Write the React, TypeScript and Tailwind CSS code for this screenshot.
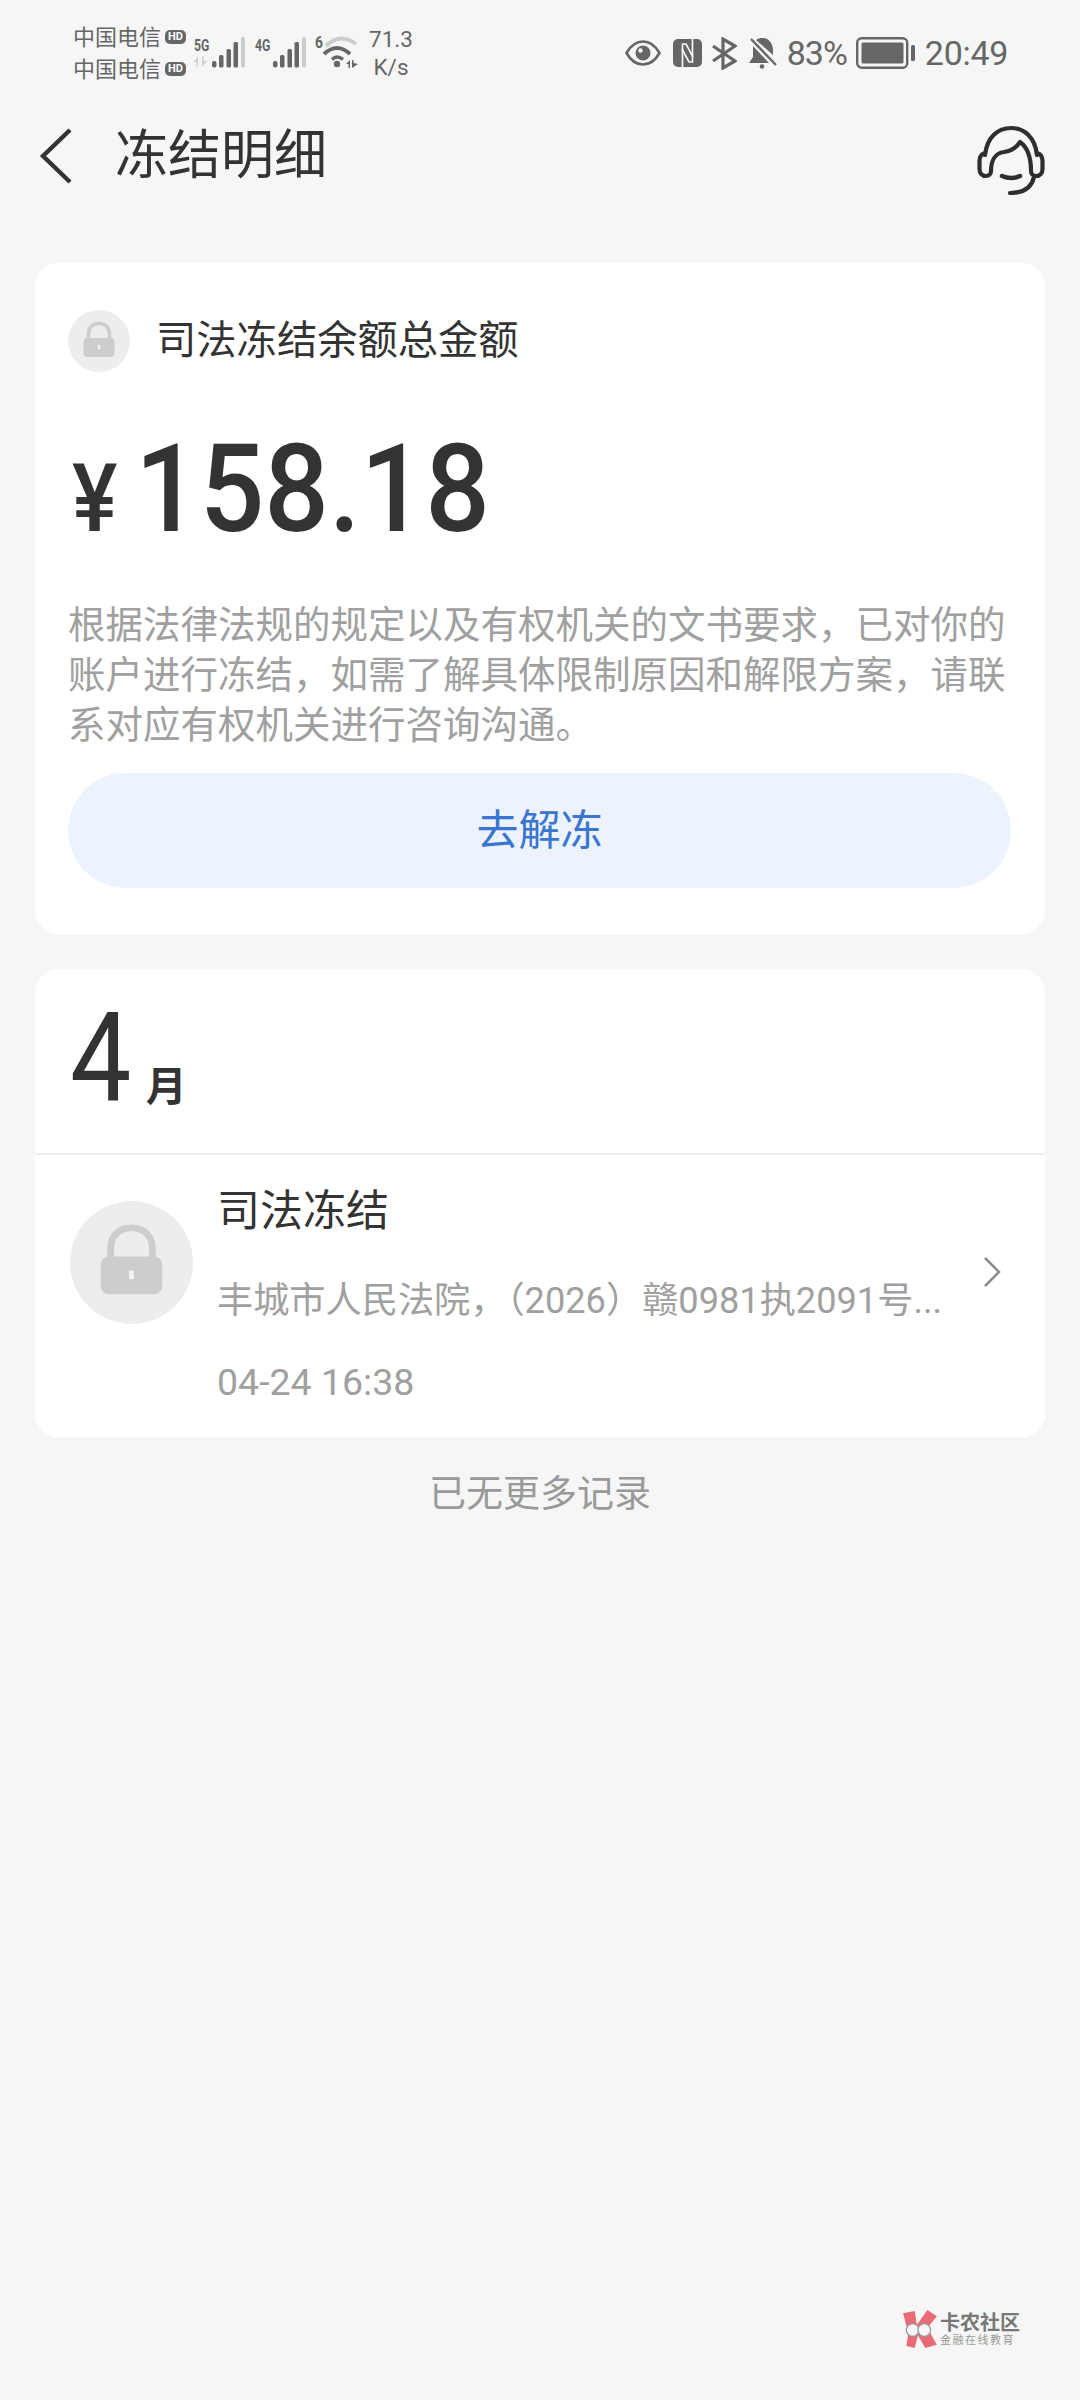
const FONT = "font-[Roboto,'Noto_Sans_CJK_SC',sans-serif]";

function Signal({ label, arrows }: { label: string; arrows?: boolean }) {
  return (
    <div className="h-[31px] w-[51px] relative shrink-0">
      <span className="absolute left-0 top-[-2px] w-[24px] text-[17px] leading-[20px] font-bold text-[#666] scale-x-[0.72] origin-left">{label}</span>
      {arrows && (
        <svg width="16" height="11" viewBox="0 0 16 11" className="absolute left-0 bottom-[1px]">
          <path d="M0 6L4 0V11H2.500V6ZM8 0H9.500V5H13L8 11Z" fill="#d0d0d0" />
        </svg>
      )}
      <svg width="33" height="31" viewBox="0 0 33 31" className="absolute right-0 top-0">
        <rect x="0" y="24" width="4.500" height="6.500" rx="2" fill="#666" />
        <rect x="7" y="18" width="4.500" height="12.500" rx="1.500" fill="#666" />
        <rect x="14.500" y="12" width="4.500" height="18.500" rx="1.500" fill="#666" />
        <rect x="21.500" y="5" width="4.500" height="25.500" rx="1.500" fill="#666" />
        <rect x="29" y="0" width="4" height="30.500" rx="1.500" fill="#ccc" />
      </svg>
    </div>
  );
}

function HD() {
  return <span className="w-[21px] h-[14px] rounded-[5px] bg-[#666] text-white text-[11px] leading-[14px] font-bold text-center ml-[4px] shrink-0">HD</span>;
}

function Lock({ size }: { size: number }) {
  return (
    <svg width={size} height={size} viewBox="0 0 62 62" className="shrink-0">
      <circle cx="31" cy="31" r="31" fill="#ededed" />
      <path d="M20.500 31V23.500C20.500 17.500 25 13.500 31 13.500C37 13.500 41.500 17.500 41.500 23.500V31" fill="none" stroke="#cdcdcd" strokeWidth="3.400" />
      <rect x="15.500" y="28" width="31" height="19" rx="4" fill="#cdcdcd" />
      <rect x="29.800" y="35" width="2.400" height="4.400" fill="#f4f4f4" />
    </svg>
  );
}

function Headset() {
  return (
    <svg width="68" height="70" viewBox="0 0 68 70" fill="none" stroke="#2e2e2e" strokeWidth="4.200" strokeLinecap="round" strokeLinejoin="round">
      <path d="M8 30C10 12 21 3 34 3C47 3 58 12 60 30" />
      <path d="M8 28C4 29 2.500 32 2.500 36V44C2.500 48 5 51 9 51C12 51 14 49 14 46C14 36 18 28 27 27C34 26 39 23 43 17C50 22 54 31 54 46C54 49 56 51 59 51C63 51 65.500 48 65.500 44V36C65.500 32 64 29 60 28" />
      <path d="M25 51Q34 55 43 51" strokeWidth="4.500" />
      <path d="M57 52C55 61 48 68 33 68" />
    </svg>
  );
}

export default function App() {
  return (
    <div className={`w-[1080px] h-[2400px] bg-[#f6f6f6] flex flex-col ${FONT} text-[#333]`}>
      <div className="h-[106px] flex items-start pl-[73px] pr-[72px] pt-[25px] text-[#666] shrink-0">
        <div className="flex flex-col w-[112px] shrink-0 whitespace-nowrap mt-[-4px]">
          <div className="flex items-center h-[32px] text-[22px]">中国电信<HD /></div>
          <div className="flex items-center h-[32px] text-[22px]">中国电信<HD /></div>
        </div>
        <div className="flex items-start mt-[12px] ml-[9px]">
          <Signal label="5G" arrows />
          <div className="ml-[10px]"><Signal label="4G" /></div>
          <svg width="44" height="34" viewBox="0 0 44 34" fill="#666" className="ml-[9px] mt-[-2px] shrink-0">
            <text x="0" y="13" fontSize="17" fontWeight="700" textLength="8" lengthAdjust="spacingAndGlyphs">6</text>
            <path d="M11 11Q25 -3 41 9" fill="none" stroke="#ccc" strokeWidth="4" />
            <path d="M9 19Q22 7 35 19" fill="none" stroke="#666" strokeWidth="3.800" />
            <path d="M17 24.500Q22 19.500 28 24.500" fill="none" stroke="#666" strokeWidth="3.400" />
            <circle cx="22" cy="29" r="3.200" />
            <path d="M31 29L35 25V33H33.500V29ZM37 25H38.500V28L43 29L37 33Z" fill="#666" />
          </svg>
        </div>
        <div className="flex flex-col items-center w-[44px] ml-[10px] text-[22.500px] leading-[28px] shrink-0">
          <span>71.3</span>
          <span>K/s</span>
        </div>
        <div className="ml-auto flex items-center h-[56px] whitespace-nowrap">
          <svg width="36" height="28" viewBox="0 0 36 28" fill="none">
            <path d="M1.500 14C6 6 11 2.500 18 2.500C25 2.500 30 6 34.500 14C30 22 25 25.500 18 25.500C11 25.500 6 22 1.500 14Z" stroke="#666" strokeWidth="2.600" />
            <circle cx="18" cy="14" r="7.500" fill="#666" />
            <circle cx="15.500" cy="11.500" r="2.200" fill="#f6f6f6" />
          </svg>
          <svg width="29" height="28" viewBox="0 0 29 28" fill="none" className="ml-[12px]">
            <rect x="0" y="0" width="29" height="28" rx="5" fill="#666" />
            <path d="M9.500 28V5H13L20 18" stroke="#f6f6f6" strokeWidth="1.700" />
            <path d="M19.500 0V23H16L9 10" stroke="#f6f6f6" strokeWidth="1.700" />
          </svg>
          <svg width="25" height="33" viewBox="0 0 25 33" fill="none" stroke="#666" strokeWidth="3.200" className="ml-[10px]">
            <path d="M1 9L23 24L11 31V2L23 9L1 24" />
          </svg>
          <svg width="28" height="32" viewBox="0 0 28 32" className="ml-[12px]">
            <path d="M14 1C20 1 24 7 24 13V18L7 3C9 1.500 11 1 14 1ZM4 9L20 26H0L4 20Z" fill="#666" />
            <path d="M1 1L27 28" stroke="#f6f6f6" strokeWidth="1" />
            <path d="M2 2L27 28" stroke="#666" strokeWidth="2.400" />
            <circle cx="13" cy="29.500" r="2.300" fill="#666" />
          </svg>
          <span className="text-[34px] ml-[10px] tracking-[-1px]">83%</span>
          <svg width="59" height="32" viewBox="0 0 59 32" className="ml-[9px]">
            <rect x="1.200" y="1.200" width="50" height="29.500" rx="4.500" fill="none" stroke="#666" strokeWidth="2.400" />
            <rect x="5.500" y="5.500" width="42" height="21" rx="1.500" fill="#666" />
            <rect x="55" y="8" width="4" height="16" rx="1.500" fill="#666" />
          </svg>
          <span className="text-[34px] ml-[10px] tracking-[-0.3px]">20:49</span>
        </div>
      </div>

      <div className="h-[100px] flex items-center pl-[39px] pr-[35px] shrink-0">
        <svg width="34" height="56" viewBox="0 0 34 56" fill="none" stroke="#333" strokeWidth="4.400">
          <path d="M31 2L4 28L31 54" />
        </svg>
        <span className="text-[53px] ml-[42px] leading-[64px]">冻结明细</span>
        <div className="ml-auto mt-[8px]"><Headset /></div>
      </div>

      <div className="mx-[35px] mt-[57px] h-[671px] rounded-[24px] bg-white px-[33px] flex flex-col shrink-0">
        <div className="flex items-center mt-[47px] h-[62px]">
          <Lock size={62} />
          <span className="text-[40.300px] ml-[26px] leading-[50px]">司法冻结余额总金额</span>
        </div>
        <div className="flex items-baseline h-[130px] mt-[52px] ml-[4px] font-medium whitespace-nowrap">
          <span className="text-[95px] leading-[130px] w-[63px] shrink-0 scale-x-[0.9] origin-left">¥</span>
          <span className="text-[123px] leading-[130px] scale-x-[0.925] origin-left">158.18</span>
        </div>
        <p className="text-[37.500px] leading-[50px] text-[#a0a0a0] mt-[46px] w-[945px]">根据法律法规的规定以及有权机关的文书要求，已对你的账户进行冻结，如需了解具体限制原因和解限方案，请联系对应有权机关进行咨询沟通。</p>
        <div className="h-[115px] mt-[23px] w-[943px] rounded-full bg-[#ecf3fd] flex items-center justify-center text-[42px] text-[#3a75d0]">去解冻</div>
      </div>

      <div className="mx-[35px] mt-[35px] h-[468px] rounded-[24px] bg-white flex flex-col shrink-0">
        <div className="h-[186px] border-b-2 border-[#eeeeee] flex items-baseline pl-[35px] shrink-0">
          <span className="text-[124px] leading-[179px] scale-x-[0.88] origin-left">4</span>
          <span className="text-[41px] font-bold ml-[6px]">月</span>
        </div>
        <div className="flex-1 flex items-center pl-[35px] pr-[42px]">
          <div className="self-start mt-[46px]"><Lock size={123} /></div>
          <div className="ml-[24px] self-start flex flex-col w-[725px] mt-[27px]">
            <span className="text-[43px] leading-[58px]">司法冻结</span>
            <span className="text-[36.200px] leading-[50px] mt-[36px] text-[#a0a0a0] whitespace-nowrap">丰城市人民法院，（2026）赣0981执2091号...</span>
            <span className="text-[37.500px] leading-[50px] mt-[31px] text-[#a0a0a0]">04-24 16:38</span>
          </div>
          <svg width="20" height="34" viewBox="0 0 20 34" fill="none" stroke="#8d8d8d" strokeWidth="2.500" className="ml-auto mb-[48px]">
            <path d="M2 3L16 17L2 31" />
          </svg>
        </div>
      </div>

      <div className="text-[37px] leading-[50px] text-[#999] text-center mt-[33px]">已无更多记录</div>

      <div className="mt-auto mb-[52px] mr-[60px] self-end flex items-center">
        <svg width="36" height="38" viewBox="0 0 34 36" className="shrink-0">
          <path d="M1 3L12 1L14 14L24 0L33 6L24 17L33 33L22 36L15 24L12 36L4 34L6 22Z" fill="#ea6a75" />
          <circle cx="10" cy="19" r="6" fill="#f6f6f6" stroke="#999" strokeWidth="1.200" />
          <circle cx="21" cy="19" r="6" fill="#f6f6f6" stroke="#999" strokeWidth="1.200" />
        </svg>
        <div className="flex flex-col ml-[2px] text-[#777]">
          <span className="text-[20px] leading-[22px] font-bold">卡农社区</span>
          <span className="text-[11px] leading-[13px] tracking-[1.500px] text-[#999]">金融在线教育</span>
        </div>
      </div>
    </div>
  );
}
